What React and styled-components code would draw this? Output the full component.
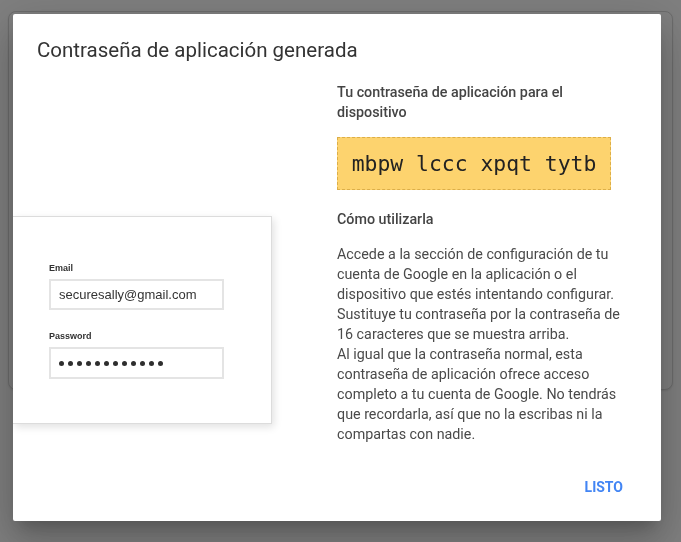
import React from "react";
import styled, { createGlobalStyle } from "styled-components";

const GlobalStyle = createGlobalStyle`
  html, body {
    margin: 0;
    padding: 0;
    background: #ffffff;
  }
  body {
    width: 681px;
    height: 542px;
    overflow: hidden;
    font-family: Roboto, "Noto Sans", Arial, sans-serif;
  }
`;

// page behind the scrim
const Page = styled.div`
  height: 542px;
  padding: 11px 8px 0 8px;
  box-sizing: border-box;
`;

const BackCard = styled.div`
  height: 377px;
  border: 1px solid #d8d8d8;
  border-radius: 8px;
  background: #ffffff;
  box-shadow: 0 1px 2px rgba(0, 0, 0, 0.1);
`;

const Scrim = styled.div`
  position: fixed;
  inset: 0;
  background: rgba(0, 0, 0, 0.5);
  display: flex;
  align-items: flex-start;
  padding: 14px 0 0 13px;
`;

const Dialog = styled.div`
  width: 648px;
  background: #ffffff;
  border-radius: 2px;
  overflow: hidden;
  box-shadow: 0 11px 15px -7px rgba(0, 0, 0, 0.2),
    0 24px 38px 3px rgba(0, 0, 0, 0.14), 0 9px 46px 8px rgba(0, 0, 0, 0.12);
`;

const Title = styled.h2`
  margin: 0;
  padding: 22px 24px 0 24px;
  font-size: 20.5px;
  line-height: 28px;
  font-weight: 400;
  color: #333333;
`;

const Body = styled.div`
  display: flex;
  margin-top: 18px;
  padding-right: 34px;
`;

const Illustration = styled.div`
  width: 324px;
  flex: none;
`;

const FormCard = styled.div`
  margin-top: 134px;
  width: 259px;
  box-sizing: border-box;
  padding: 46px 0 44px 36px;
  border: 1px solid #dcdcdc;
  border-left: none;
  background: #ffffff;
  box-shadow: 2px 3px 8px rgba(0, 0, 0, 0.12);
  font-family: "Liberation Sans", Arial, sans-serif;
`;

const FieldLabel = styled.div`
  font-size: 9px;
  line-height: 11px;
  font-weight: 700;
  color: #333333;
  margin-top: ${(p) => (p.first ? "0" : "21px")};
  margin-bottom: 5px;
`;

const FakeInput = styled.div`
  width: 175px;
  height: ${(p) => p.h || 31}px;
  box-sizing: border-box;
  border: 2px solid #e4e4e4;
  padding-left: 8px;
  display: flex;
  align-items: center;
  gap: 4px;
  font-size: 13px;
  color: #333333;
`;

const Dot = styled.span`
  width: 5px;
  height: 5px;
  border-radius: 50%;
  background: #2e2e2e;
`;

const Info = styled.div`
  width: 290px;
  flex: none;
`;

const Heading = styled.div`
  font-size: 14.3px;
  line-height: 20px;
  font-weight: 500;
  color: #444444;
  margin-bottom: ${(p) => p.mb}px;
`;

const PasswordBox = styled.div`
  display: inline-block;
  width: 274px;
  height: 53px;
  box-sizing: border-box;
  background: #fdd36e;
  border: 1px dashed #dcae48;
  text-align: center;
  font-family: "DejaVu Sans Mono", "Liberation Mono", monospace;
  font-size: 21.4px;
  line-height: 51px;
  color: #222222;
  margin-bottom: 19px;
  vertical-align: top;
`;

const Paragraph = styled.p`
  margin: 0;
  font-size: 14.3px;
  line-height: 20px;
  color: #4a4a4a;
`;

const Actions = styled.div`
  display: flex;
  justify-content: flex-end;
  padding: 25px 30px 16px 0;
`;

const TextButton = styled.button`
  height: 36px;
  padding: 0 8px;
  border: none;
  background: transparent;
  font-family: Roboto, Arial, sans-serif;
  font-size: 14px;
  font-weight: 700;
  color: #4285f4;
  text-transform: uppercase;
  cursor: pointer;
`;

export default function App() {
  return (
    <>
      <GlobalStyle />
      <Page>
        <BackCard />
      </Page>
      <Scrim>
        <Dialog>
          <Title>Contraseña de aplicación generada</Title>
          <Body>
            <Illustration>
              <FormCard>
                <FieldLabel first>Email</FieldLabel>
                <FakeInput>securesally@gmail.com</FakeInput>
                <FieldLabel>Password</FieldLabel>
                <FakeInput h={32}>
                  {Array.from({ length: 12 }).map((_, i) => (
                    <Dot key={i} />
                  ))}
                </FakeInput>
              </FormCard>
            </Illustration>
            <Info>
              <Heading mb={15}>Tu contraseña de aplicación para el dispositivo</Heading>
              <PasswordBox>mbpw lccc xpqt tytb</PasswordBox>
              <Heading mb={15}>Cómo utilizarla</Heading>
              <Paragraph>
                Accede a la sección de configuración de tu cuenta de Google en la
                aplicación o el dispositivo que estés intentando configurar.
                Sustituye tu contraseña por la contraseña de 16 caracteres que se
                muestra arriba.
                <br />
                Al igual que la contraseña normal, esta contraseña de aplicación
                ofrece acceso completo a tu cuenta de Google. No tendrás que
                recordarla, así que no la escribas ni la compartas con nadie.
              </Paragraph>
            </Info>
          </Body>
          <Actions>
            <TextButton>Listo</TextButton>
          </Actions>
        </Dialog>
      </Scrim>
    </>
  );
}
